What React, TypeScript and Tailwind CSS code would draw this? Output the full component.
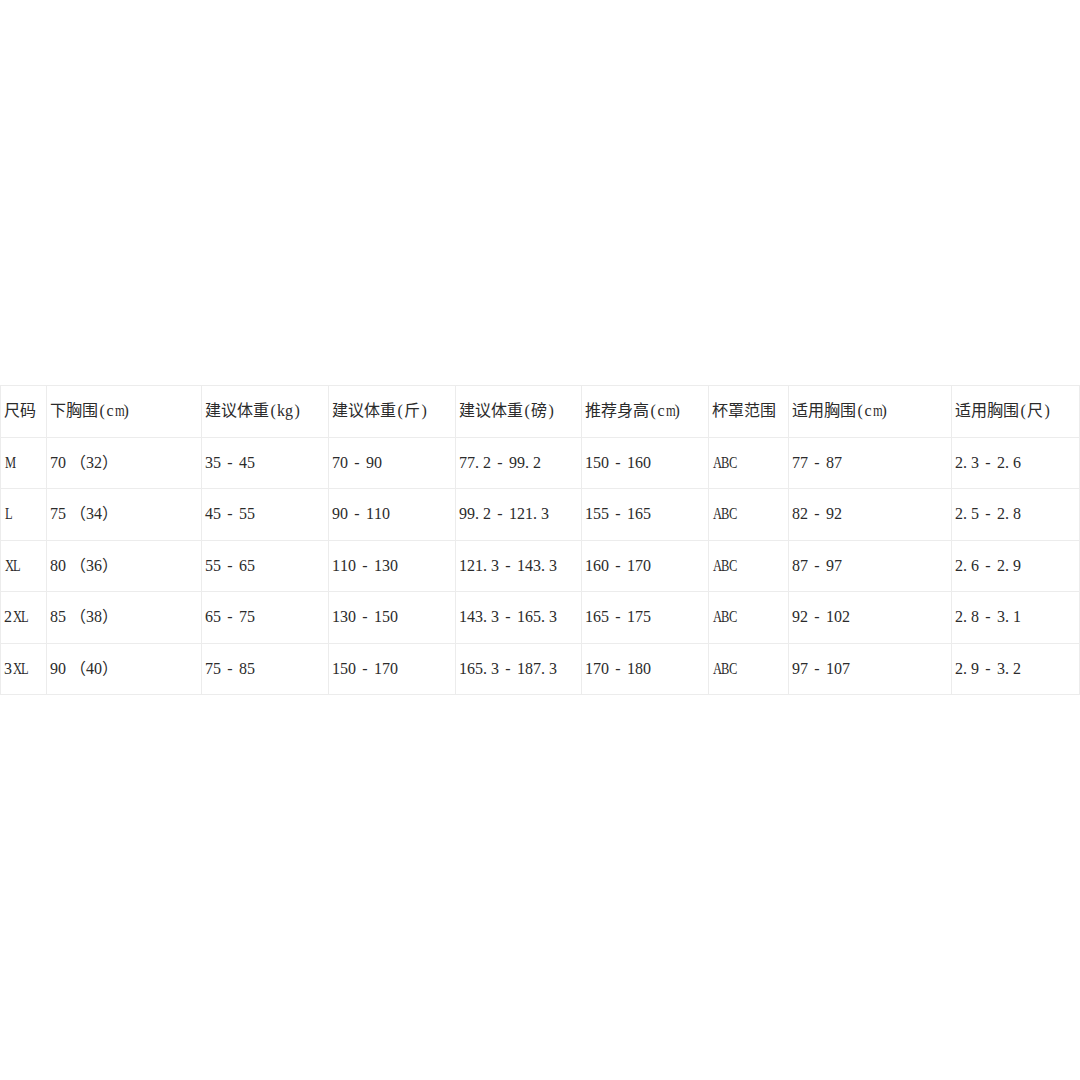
import React from 'react';

const headers = ['尺码', '下胸围(cm)', '建议体重(kg)', '建议体重(斤)', '建议体重(磅)', '推荐身高(cm)', '杯罩范围', '适用胸围(cm)', '适用胸围(尺)'];

const rows: string[][] = [
  ['M', '70 （32）', '35 - 45', '70 - 90', '77.2 - 99.2', '150 - 160', 'ABC', '77 - 87', '2.3 - 2.6'],
  ['L', '75 （34）', '45 - 55', '90 - 110', '99.2 - 121.3', '155 - 165', 'ABC', '82 - 92', '2.5 - 2.8'],
  ['XL', '80 （36）', '55 - 65', '110 - 130', '121.3 - 143.3', '160 - 170', 'ABC', '87 - 97', '2.6 - 2.9'],
  ['2XL', '85 （38）', '65 - 75', '130 - 150', '143.3 - 165.3', '165 - 175', 'ABC', '92 - 102', '2.8 - 3.1'],
  ['3XL', '90 （40）', '75 - 85', '150 - 170', '165.3 - 187.3', '170 - 180', 'ABC', '97 - 107', '2.9 - 3.2'],
];

const widths = [46, 155, 127, 127, 126, 127, 80, 163, 128];

// half-width latin like SimSun: ascii glyphs sit in 8px boxes
const Cell: React.FC<{ text: string }> = ({ text }) => (
  <td className="border border-[#ececec] pl-[3px] whitespace-nowrap">
    {text.split('').map((ch, i) => {
      if (ch.charCodeAt(0) > 127 || ch === ' ') return <span key={i}>{ch}</span>;
      if (ch === '.') return <span key={i} className="inline-block w-[8px] text-left">.</span>;
      if (ch === '-') return <span key={i} className="inline-block w-[10px] text-center">-</span>;
      const wide = /[A-Zmw]/.test(ch);
      return (
        <span key={i} className={wide ? 'inline-block w-[8px] text-center scale-x-[0.78]' : 'inline-block w-[8px] text-center'}>
          {ch}
        </span>
      );
    })}
  </td>
);

const App: React.FC = () => {
  return (
    <div className="w-[1080px] h-[1080px] bg-white flex items-center font-['Liberation_Serif','Noto_Sans_CJK_SC',serif] text-[#2b2b2b] text-[16px]">
      <table className="table-fixed border-collapse w-[1079px]">
        <colgroup>
          {widths.map((w, i) => (
            <col key={i} style={{ width: w }} />
          ))}
        </colgroup>
        <tbody>
          <tr className="h-[51.5px]">
            {headers.map(h => (
              <Cell key={h} text={h} />
            ))}
          </tr>
          {rows.map(r => (
            <tr key={r[0]} className="h-[51.5px]">
              {r.map((c, i) => (
                <Cell key={i} text={c} />
              ))}
            </tr>
          ))}
        </tbody>
      </table>
    </div>
  );
};

export default App;
